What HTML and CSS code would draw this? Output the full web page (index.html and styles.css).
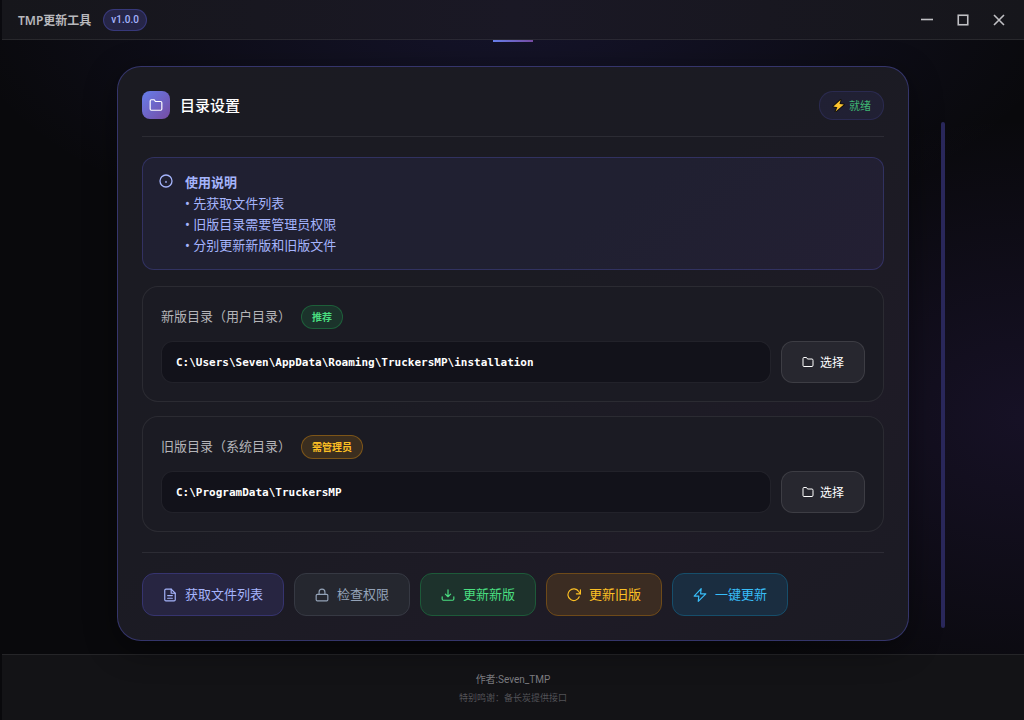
FILE: index.html
```html
<!DOCTYPE html>
<html lang="zh-CN">
<head>
    <meta charset="UTF-8">
    <meta name="viewport" content="width=device-width, initial-scale=1.0">
    <title>TMP更新工具</title>
    <link rel="stylesheet" href="styles.css">
</head>
<body>

    <!-- Title bar -->
    <header class="titlebar">
        <div class="titlebar-left">
            <span class="app-title">TMP更新工具</span>
            <span class="version">v1.0.0</span>
        </div>
        <div class="window-controls">
            <button type="button" aria-label="最小化">
                <svg width="12" height="12" viewBox="0 0 12 12"><path d="M0 5.5h12" stroke-width="1.6"/></svg>
            </button>
            <button type="button" aria-label="最大化">
                <svg width="12" height="12" viewBox="0 0 12 12"><rect x="1.25" y="1.25" width="9.5" height="9.5" stroke-width="1.6"/></svg>
            </button>
            <button type="button" aria-label="关闭">
                <svg width="12" height="12" viewBox="0 0 12 12"><path d="M1 1l10 10M11 1L1 11" stroke-width="1.6"/></svg>
            </button>
        </div>
    </header>

    <!-- Main content -->
    <main class="main">
        <section class="card">
            <div class="card-header">
                <div class="card-title">
                    <span class="card-icon">
                        <svg width="14" height="14" viewBox="0 0 24 24"><path d="M22 19a2 2 0 0 1-2 2H4a2 2 0 0 1-2-2V5a2 2 0 0 1 2-2h5l2 3h9a2 2 0 0 1 2 2z"/></svg>
                    </span>
                    <h1>目录设置</h1>
                </div>
                <div class="status">
                    <svg width="13" height="13" viewBox="0 0 13 13"><path d="M8.6 1L1.4 7.6l4 .6-1.800 4.200L11.800 5.600l-4.300-.6z"/></svg>
                    <span>就绪</span>
                </div>
            </div>

            <div class="info">
                <svg width="14" height="14" viewBox="0 0 14 14"><circle cx="7" cy="7" r="6"/><path d="M7 7.4v1"/></svg>
                <div>
                    <strong>使用说明</strong>
                    <p>• 先获取文件列表</p>
                    <p>• 旧版目录需要管理员权限</p>
                    <p>• 分别更新新版和旧版文件</p>
                </div>
            </div>

            <div class="path-box">
                <div class="path-label">
                    <label for="new-path">新版目录（用户目录）</label>
                    <span class="badge badge-green">推荐</span>
                </div>
                <div class="path-row">
                    <input type="text" id="new-path" value="C:\Users\Seven\AppData\Roaming\TruckersMP\installation" readonly>
                    <button type="button" class="select-btn">
                        <svg width="12" height="12" viewBox="0 0 24 24"><path d="M22 19a2 2 0 0 1-2 2H4a2 2 0 0 1-2-2V5a2 2 0 0 1 2-2h5l2 3h9a2 2 0 0 1 2 2z"/></svg>
                        选择
                    </button>
                </div>
            </div>

            <div class="path-box">
                <div class="path-label">
                    <label for="old-path">旧版目录（系统目录）</label>
                    <span class="badge badge-amber">需管理员</span>
                </div>
                <div class="path-row">
                    <input type="text" id="old-path" value="C:\ProgramData\TruckersMP" readonly>
                    <button type="button" class="select-btn">
                        <svg width="12" height="12" viewBox="0 0 24 24"><path d="M22 19a2 2 0 0 1-2 2H4a2 2 0 0 1-2-2V5a2 2 0 0 1 2-2h5l2 3h9a2 2 0 0 1 2 2z"/></svg>
                        选择
                    </button>
                </div>
            </div>

            <div class="actions">
                <button type="button" class="btn btn-indigo">
                    <svg width="14" height="14" viewBox="0 0 24 24"><path d="M14 2H5a2 2 0 0 0-2 2v16a2 2 0 0 0 2 2h14a2 2 0 0 0 2-2V9z"/><path d="M14 2v7h7M8 13h8M8 17.5h8"/></svg>
                    获取文件列表
                </button>
                <button type="button" class="btn btn-gray">
                    <svg width="14" height="14" viewBox="0 0 24 24"><rect x="2" y="11" width="20" height="11" rx="2"/><path d="M7 11V7a5 5 0 0 1 10 0v4"/></svg>
                    检查权限
                </button>
                <button type="button" class="btn btn-green">
                    <svg width="14" height="14" viewBox="0 0 24 24"><path d="M22 15v4a2 2 0 0 1-2 2H4a2 2 0 0 1-2-2v-4M7.500 10.500l4.500 4.500 4.500-4.500M12 15V3"/></svg>
                    更新新版
                </button>
                <button type="button" class="btn btn-amber">
                    <svg width="14" height="14" viewBox="0 0 24 24"><path d="M23 3v7h-7"/><path d="M21 15a10 10 0 1 1-1-9l3 4"/></svg>
                    更新旧版
                </button>
                <button type="button" class="btn btn-blue">
                    <svg width="14" height="14" viewBox="0 0 24 24"><path d="M14 1L2 14h8l-1 9L22 10h-9z"/></svg>
                    一键更新
                </button>
            </div>
        </section>
        <div class="scroll-thumb"></div>
    </main>

    <!-- Footer -->
    <footer class="footer">
        <p class="author">作者:Seven_TMP</p>
        <p class="thanks">特别鸣谢：备长炭提供接口</p>
    </footer>

</body>
</html>
```
FILE: styles.css
```css
* {
    margin: 0;
    padding: 0;
    box-sizing: border-box;
}

body {
    display: flex;
    flex-direction: column;
    min-height: 100vh;
    padding-left: 2px;
    background:
        radial-gradient(ellipse 400px 300px at 100% 58%, rgba(118, 75, 220, 0.12), transparent),
        radial-gradient(ellipse 560px 260px at 50% 0, rgba(99, 90, 241, 0.14), transparent),
        #09090c;
    color: #fff;
    font-family: "Noto Sans", "Noto Sans CJK SC", sans-serif;
    font-size: 13px;
}

button, input {
    font-family: inherit;
    color: inherit;
}

button {
    cursor: pointer;
}

svg {
    flex: none;
    fill: none;
    stroke: currentColor;
    stroke-width: 2;
    stroke-linecap: round;
    stroke-linejoin: round;
}

/* Title bar */
.titlebar {
    display: flex;
    align-items: center;
    justify-content: space-between;
    height: 40px;
    padding: 0 16px;
    background: linear-gradient(90deg, #16161b, #1a1825 50%, #16161b);
    border-bottom: 1px solid rgba(255, 255, 255, 0.08);
}

.titlebar-left {
    display: flex;
    align-items: center;
    gap: 12px;
}

.app-title {
    color: #b8b8bc;
    font-size: 12px;
    font-weight: 600;
}

.version {
    padding: 0 7px;
    line-height: 20px;
    border: 1px solid rgba(99, 102, 241, 0.3);
    border-radius: 11px;
    background-color: rgba(99, 102, 241, 0.2);
    color: #a5b4fc;
    font-family: Roboto, sans-serif;
    font-size: 10px;
    font-weight: 500;
}

.window-controls {
    display: flex;
    gap: 18px;
}

.window-controls button {
    display: flex;
    align-items: center;
    justify-content: center;
    width: 18px;
    height: 18px;
    border: none;
    background: none;
    color: #c0c0c4;
}

.window-controls svg {
    stroke-linecap: butt;
    stroke-linejoin: miter;
}

/* Main area */
.main {
    flex: 1;
    display: grid;
    grid-template-columns: 1fr minmax(0, 792px) 1fr;
    padding: 26px 0 13px;
    position: relative;
}

/* Accent line under the title bar */
.main::before {
    content: "";
    position: absolute;
    top: 0;
    left: calc(50% - 20px);
    width: 40px;
    height: 2px;
    background: linear-gradient(90deg, #667eea, #764ba2);
}

.card {
    grid-column: 2;
    padding: 24px;
    border: 1px solid rgba(99, 102, 241, 0.35);
    border-radius: 24px;
    background: linear-gradient(145deg, #1b1b22 0%, #1b1b23 45%, #1e1b26 75%, #1b1b23 100%);
    box-shadow: 0 8px 32px rgba(0, 0, 0, 0.4);
}

.scroll-thumb {
    width: 4px;
    margin: 56px 0 13px 32px;
    border-radius: 2px;
    background-color: #29275a;
}

.card-header {
    display: flex;
    align-items: flex-start;
    justify-content: space-between;
    padding-bottom: 16px;
    margin-bottom: 20px;
    border-bottom: 1px solid rgba(255, 255, 255, 0.08);
}

.card-title {
    display: flex;
    align-items: center;
    gap: 10px;
}

.card-title h1 {
    font-size: 15px;
    font-weight: 500;
    line-height: 20px;
}

.card-icon {
    display: flex;
    align-items: center;
    justify-content: center;
    width: 28px;
    height: 28px;
    border-radius: 8px;
    background: linear-gradient(135deg, #667eea, #764ba2);
}

.status {
    display: flex;
    align-items: center;
    gap: 4px;
    padding: 0 12px;
    line-height: 27px;
    border: 1px solid rgba(99, 102, 241, 0.15);
    border-radius: 14px;
    background-color: rgba(99, 102, 241, 0.08);
    color: #3fb673;
    font-size: 11px;
}

.status svg {
    fill: #fdc42f;
    stroke: #14120e;
    paint-order: stroke;
}

/* Instructions */
.info {
    display: flex;
    gap: 12px;
    padding: 14px 16px 13px;
    margin-bottom: 16px;
    border: 1px solid rgba(99, 102, 241, 0.25);
    border-radius: 12px;
    background: linear-gradient(145deg, #202032, #202031 60%, #231f33);
    color: #a5b4fc;
    line-height: 21px;
}

.info svg {
    margin-top: 2px;
    stroke-width: 1.3;
}

.info strong {
    display: block;
    font-weight: 700;
}

/* Directory boxes */
.path-box {
    padding: 18px;
    margin-bottom: 14px;
    border: 1px solid rgba(255, 255, 255, 0.07);
    border-radius: 16px;
    background-color: #1b1b23;
}

.path-label {
    display: flex;
    align-items: flex-start;
    gap: 10px;
    margin-bottom: 12px;
    color: #b4b4b8;
    line-height: 22px;
}

.badge {
    padding: 0 10px;
    border: 1px solid;
    border-radius: 12px;
    font-size: 10px;
    font-weight: 600;
}

.badge-green {
    border-color: rgba(34, 197, 94, 0.3);
    background-color: rgba(34, 197, 94, 0.15);
    color: #4ade80;
}

.badge-amber {
    border-color: rgba(245, 158, 11, 0.35);
    background-color: rgba(245, 158, 11, 0.15);
    color: #fbbf24;
}

.path-row {
    display: flex;
    gap: 10px;
}

.path-row input {
    flex: 1;
    min-width: 0;
    height: 42px;
    padding: 0 14px;
    border: 1px solid rgba(255, 255, 255, 0.07);
    border-radius: 12px;
    background-color: #12121a;
    font-family: "DejaVu Sans Mono", monospace;
    font-size: 11px;
    font-weight: 700;
}

.select-btn {
    display: flex;
    align-items: center;
    gap: 6px;
    padding: 0 20px;
    border: 1px solid rgba(255, 255, 255, 0.1);
    border-radius: 12px;
    background-color: #27272f;
    font-size: 12px;
    font-weight: 400;
}

/* Action buttons */
.actions {
    display: flex;
    flex-wrap: wrap;
    gap: 10px;
    margin-top: 20px;
    padding-top: 20px;
    border-top: 1px solid rgba(255, 255, 255, 0.08);
}

.btn {
    display: flex;
    align-items: center;
    gap: 8px;
    padding: 12px 20px;
    border: 1px solid;
    border-radius: 12px;
    font-size: 13px;
    font-weight: 400;
    line-height: 17px;
}

.btn-indigo {
    border-color: #36346f;
    background-color: #272541;
    color: #a5b4fc;
}

.btn-gray {
    border-color: #363943;
    background-color: #25272f;
    color: #94a3b8;
}

.btn-green {
    border-color: #1d5a39;
    background-color: #1d322c;
    color: #4ade80;
}

.btn-amber {
    border-color: #6e4a19;
    background-color: #3b2c22;
    color: #fbbf24;
}

.btn-blue {
    border-color: #164e6b;
    background-color: #1a2d40;
    color: #38bdf8;
}

/* Footer */
.footer {
    height: 66px;
    padding-top: 17px;
    border-top: 1px solid rgba(255, 255, 255, 0.08);
    background-color: #131316;
    text-align: center;
}

.author {
    color: #7c7c80;
    font-family: Roboto, "Noto Sans CJK SC", sans-serif;
    font-size: 10px;
    line-height: 16px;
}

.thanks {
    margin-top: 2px;
    color: #525256;
    font-size: 9px;
    line-height: 16px;
}
```
